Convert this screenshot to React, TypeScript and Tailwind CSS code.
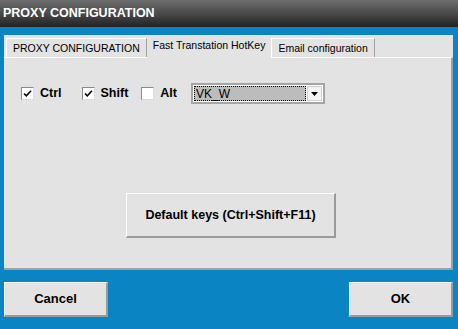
import { useState } from "react";

const FONT = { fontFamily: '"Liberation Sans", Arial, sans-serif' };

type CheckProps = {
  label: string;
  checked: boolean;
  onToggle: () => void;
};

const Check = ({ label, checked, onToggle }: CheckProps) => {
  return (
    <button type="button" className="flex items-center gap-[6px]" onClick={onToggle}>
      <span className="flex h-[13px] w-[13px] items-center justify-center border border-t-[#8a8a8a] border-l-[#8a8a8a] border-r-[#dcdcdc] border-b-[#dcdcdc] bg-white">
        {checked ? (
          <svg width="9" height="9" viewBox="0 0 9 9">
            <path d="M1 4.5 L3.3 6.8 L8 1.8" fill="none" stroke="#000" strokeWidth="1.6" />
          </svg>
        ) : null}
      </span>
      <span className="text-[12.5px] font-bold text-black">{label}</span>
    </button>
  );
};

const tabs = ["PROXY CONFIGURATION", "Fast Transtation HotKey", "Email configuration"];

export default function App() {
  const [active, setActive] = useState(1);
  const [ctrl, setCtrl] = useState(true);
  const [shift, setShift] = useState(true);
  const [alt, setAlt] = useState(false);

  return (
    <div className="flex h-[329px] w-[458px] flex-col overflow-hidden bg-[#0a84c2]" style={FONT}>
      <div className="flex h-[27px] items-center bg-gradient-to-b from-[#6e6e6e] via-[#4a4a4a] to-[#222222] pl-[3px]">
        <span className="text-[12.5px] font-bold text-white">PROXY CONFIGURATION</span>
      </div>

      <div className="flex flex-1 flex-col pl-[4px] pr-[5px] pt-[8px]">
        <div className="flex h-[235px] flex-col bg-[#e3e3e3]">
          <div className="relative flex h-[22px] items-end pl-[2px]">
            {tabs.map((tab, i) => {
              const isActive = i === active;
              return (
                <button
                  key={tab}
                  type="button"
                  onClick={() => setActive(i)}
                  className={
                    isActive
                      ? "relative z-10 -mb-[1px] flex h-[23px] items-start bg-[#e3e3e3] px-[6px] pt-[3px] text-[10.5px] text-black"
                      : "flex h-[19px] items-start border-t border-l border-r border-t-white border-l-white border-r-[#a0a0a0] bg-[#e3e3e3] px-[6px] pt-[2px] text-[10.5px] text-black"
                  }
                >
                  {tab}
                </button>
              );
            })}
          </div>

          <div className="flex flex-1 flex-col border-t border-r-2 border-b-2 border-t-white border-r-[#a0a0a0] border-b-[#a0a0a0]">
            <div className="flex items-center pl-[17px] pt-[25px]">
              <Check label="Ctrl" checked={ctrl} onToggle={() => setCtrl(!ctrl)} />
              <div className="w-[20px]" />
              <Check label="Shift" checked={shift} onToggle={() => setShift(!shift)} />
              <div className="w-[13px]" />
              <Check label="Alt" checked={alt} onToggle={() => setAlt(!alt)} />
              <div className="w-[14px]" />
              <div className="flex h-[21px] w-[134px] border-2 border-[#a5a5a5] bg-white p-[1px]">
                <div className="flex flex-1 items-center border border-dotted border-black bg-[#bcbcbc] pl-[1px] text-[12px] text-black">
                  VK_W
                </div>
                <div className="ml-[1px] flex w-[15px] items-center justify-center border border-[#d0d0d0] bg-[#f4f4f4]">
                  <svg width="7" height="4" viewBox="0 0 7 4">
                    <path d="M0 0 L7 0 L3.5 4 Z" fill="#000" />
                  </svg>
                </div>
              </div>
            </div>

            <div className="flex pt-[89px] pl-[122px]">
              <button
                type="button"
                className="h-[45px] w-[210px] border-t border-l border-r-2 border-b-2 border-t-white border-l-white border-r-[#9a9a9a] border-b-[#9a9a9a] bg-[#e3e3e3] text-[12.5px] font-bold text-black"
              >
                Default keys (Ctrl+Shift+F11)
              </button>
            </div>
          </div>
        </div>

        <div className="mt-[12px] flex justify-between">
          <button
            type="button"
            className="h-[35px] w-[104px] border-t border-l border-r-2 border-b-2 border-t-white border-l-white border-r-[#9a9a9a] border-b-[#9a9a9a] bg-[#e3e3e3] text-[13px] font-bold text-black"
          >
            Cancel
          </button>
          <button
            type="button"
            className="h-[35px] w-[104px] border-t border-l border-r-2 border-b-2 border-t-white border-l-white border-r-[#9a9a9a] border-b-[#9a9a9a] bg-[#e3e3e3] text-[13px] font-bold text-black"
          >
            OK
          </button>
        </div>
      </div>
    </div>
  );
}
